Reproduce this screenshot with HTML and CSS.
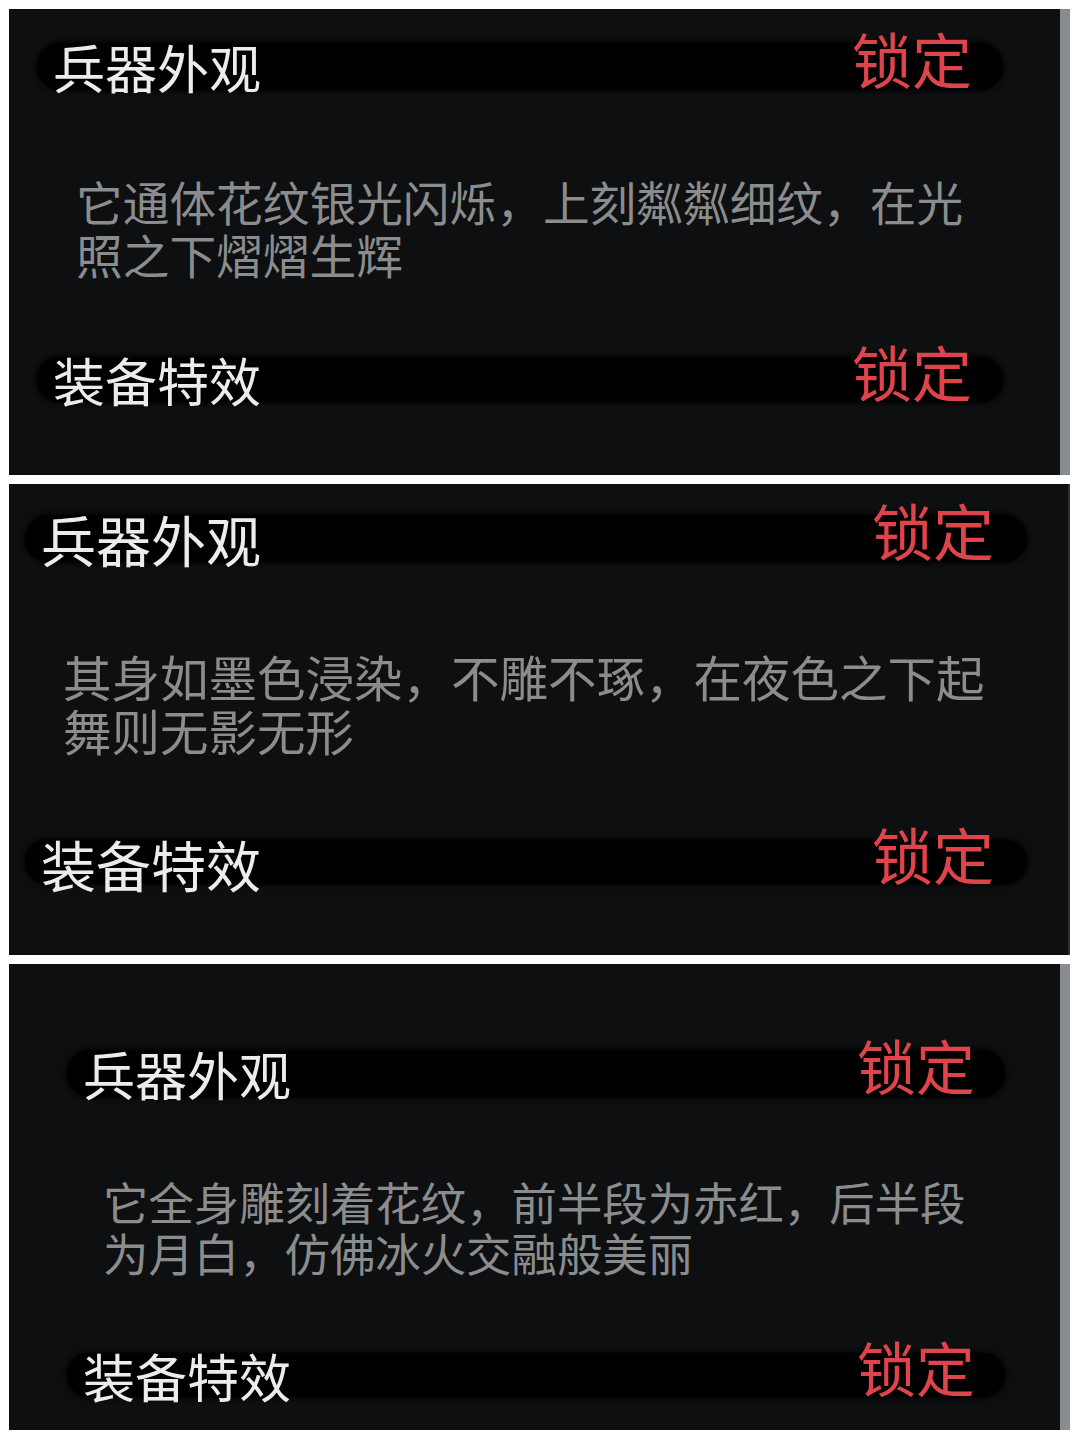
FILE: index.html
```html
<!DOCTYPE html>
<html lang="zh-CN">
<head>
<meta charset="utf-8">
<title>兵器外观</title>
<link rel="stylesheet" href="styles.css">
</head>
<body>
<main class="stack">

  <section class="card card-a">
    <div class="bar bar-top">
      <span class="bar-title">兵器外观</span>
      <span class="bar-lock">锁定</span>
    </div>
    <p class="desc">它通体花纹银光闪烁，上刻粼粼细纹，在光照之下熠熠生辉</p>
    <div class="bar bar-bottom">
      <span class="bar-title">装备特效</span>
      <span class="bar-lock">锁定</span>
    </div>
  </section>

  <section class="card card-b">
    <div class="bar bar-top">
      <span class="bar-title">兵器外观</span>
      <span class="bar-lock">锁定</span>
    </div>
    <p class="desc">其身如墨色浸染，不雕不琢，在夜色之下起舞则无影无形</p>
    <div class="bar bar-bottom">
      <span class="bar-title">装备特效</span>
      <span class="bar-lock">锁定</span>
    </div>
  </section>

  <section class="card card-c">
    <div class="bar bar-top">
      <span class="bar-title">兵器外观</span>
      <span class="bar-lock">锁定</span>
    </div>
    <p class="desc">它全身雕刻着花纹，前半段为赤红，后半段为月白，仿佛冰火交融般美丽</p>
    <div class="bar bar-bottom">
      <span class="bar-title">装备特效</span>
      <span class="bar-lock">锁定</span>
    </div>
  </section>

</main>
</body>
</html>
```

FILE: styles.css
```css
* {
  box-sizing: border-box;
}

html, body {
  margin: 0;
  padding: 0;
  background: #ffffff;
}

body {
  font-family: "Noto Sans CJK SC", "Noto Sans", sans-serif;
  width: 1080px;
  height: 1440px;
  overflow: hidden;
}

.stack {
  display: flex;
  flex-direction: column;
  gap: 9px;
  padding: 9px 0 0 9px;
}

/* one dark panel */
.card {
  width: 1061px;
  background: #0d0f11;
  display: flex;
  flex-direction: column;
  align-items: flex-start;
  border-right: 10px solid #888b8f;
}

/* black pill row with the section name and the red lock label */
.bar {
  display: flex;
  justify-content: space-between;
  align-items: flex-start;
  background: #000;
  border-radius: 24px;
  box-shadow: 0 0 4px 2px rgba(0, 0, 0, 0.75);
  flex: none;
}

.bar-title {
  color: #ececec;
  font-size: 52px;
  line-height: 47px;
  white-space: nowrap;
}

.bar-lock {
  color: #e0444b;
  font-size: 60px;
  line-height: 47px;
  margin-top: -9px;
  white-space: nowrap;
}

.desc {
  margin: 0;
  color: #8b8c8d;
  font-size: 46px;
  line-height: 53px;
}

/* ---- first panel ---- */
.card-a {
  height: 466px;
  padding-top: 34px;
}
.card-a .bar {
  margin-left: 28px;
  width: 966px;
  padding: 0 31px 0 16px;
}
.card-a .bar-top { height: 47px; }
.card-a .bar-bottom {
  height: 45px;
  margin-top: 77px;
}
.card-a .bar-bottom .bar-title,
.card-a .bar-bottom .bar-lock { line-height: 45px; }
.card-a .desc {
  font-size: 46.7px;
  margin-top: 84px;
  margin-left: 67px;
  width: 920px;
}

/* ---- second panel ---- */
.card-b {
  height: 471px;
  padding-top: 31px;
  border-right: 2px solid #2c2e30;
  width: 1061px;
}
.card-b .bar {
  margin-left: 16px;
  width: 1002px;
  padding: 0 33px 0 16px;
}
.card-b .bar-title { font-size: 55px; }
.card-b .bar-lock { font-size: 61px; }
.card-b .bar-top { height: 47px; }
.card-b .bar-bottom {
  height: 44px;
  margin-top: 83px;
}
.card-b .bar-bottom .bar-title,
.card-b .bar-bottom .bar-lock { line-height: 46px; }
.card-b .desc {
  font-size: 48.5px;
  line-height: 54px;
  margin-top: 87px;
  margin-left: 54px;
  width: 945px;
}

/* ---- third panel ---- */
.card-c {
  height: 466px;
  padding-top: 86px;
}
.card-c .bar {
  margin-left: 58px;
  width: 938px;
  padding: 0 30px 0 16px;
}
.card-c .bar-lock { font-size: 59px; }
.card-c .bar-top { height: 47px; }
.card-c .bar-bottom {
  height: 44px;
  margin-top: 75px;
}
.card-c .bar-bottom .bar-title,
.card-c .bar-bottom .bar-lock { line-height: 46px; }
.card-c .desc {
  font-size: 45.4px;
  line-height: 51px;
  margin-top: 79px;
  margin-left: 94px;
  width: 885px;
}
```
